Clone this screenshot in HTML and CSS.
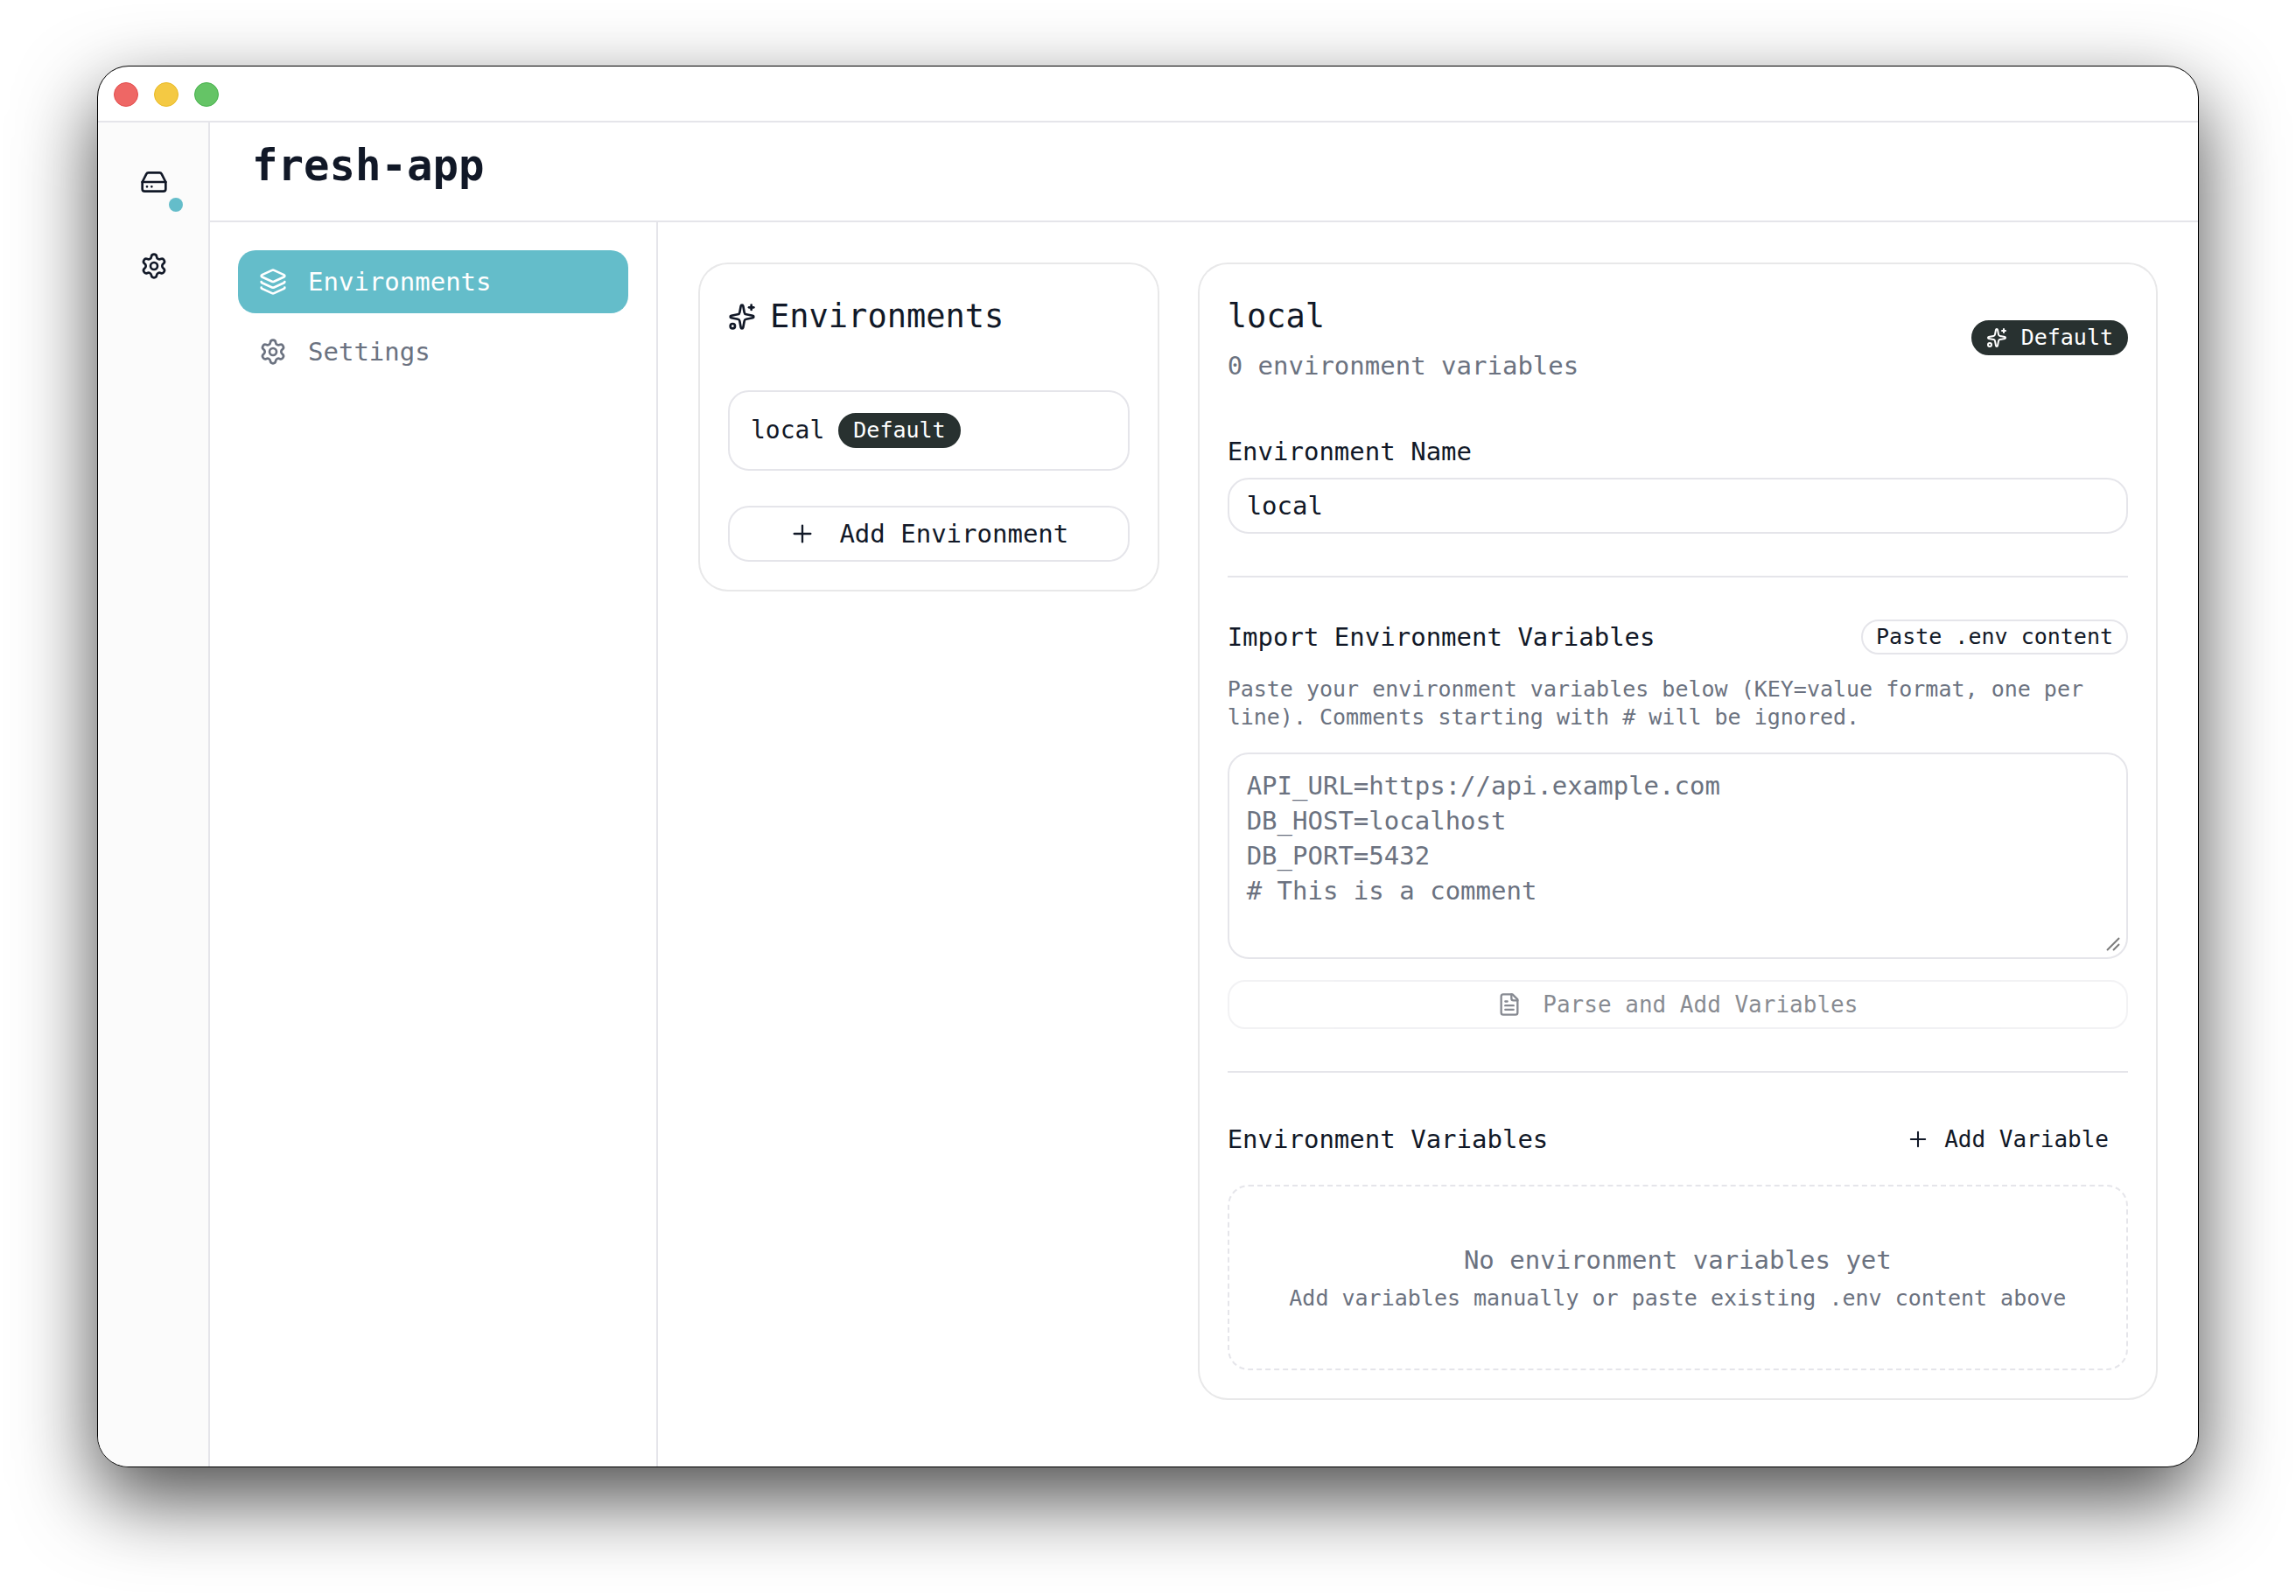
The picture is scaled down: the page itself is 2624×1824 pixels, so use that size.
FILE: index.html
```html
<!DOCTYPE html>
<html lang="en">
<head>
<meta charset="utf-8">
<meta name="viewport" content="width=device-width, initial-scale=1">
<title>fresh-app</title>
<link rel="stylesheet" href="styles.css">
</head>
<body>
<svg class="sprite" aria-hidden="true">
  <symbol id="drive" viewBox="0 0 24 24"><path d="M22 12H2"/><path d="M5.45 5.11 2 12v6a2 2 0 0 0 2 2h16a2 2 0 0 0 2-2v-6l-3.45-6.89A2 2 0 0 0 16.76 4H7.24a2 2 0 0 0-1.79 1.11z"/><path d="M6 16h.01M10 16h.01"/></symbol>
  <symbol id="gear" viewBox="0 0 24 24"><path d="M9.671 4.136a2.34 2.34 0 0 1 4.659 0 2.34 2.34 0 0 0 3.319 1.915 2.34 2.34 0 0 1 2.33 4.033 2.34 2.34 0 0 0 0 3.831 2.34 2.34 0 0 1-2.33 4.033 2.34 2.34 0 0 0-3.319 1.915 2.34 2.34 0 0 1-4.659 0 2.34 2.34 0 0 0-3.32-1.915 2.34 2.34 0 0 1-2.33-4.033 2.34 2.34 0 0 0 0-3.831A2.34 2.34 0 0 1 6.35 6.051a2.34 2.34 0 0 0 3.319-1.915"/><circle cx="12" cy="12" r="3"/></symbol>
  <symbol id="layers" viewBox="0 0 24 24"><path d="M12.83 2.18a2 2 0 0 0-1.66 0L2.6 6.08a1 1 0 0 0 0 1.83l8.58 3.91a2 2 0 0 0 1.66 0l8.58-3.9a1 1 0 0 0 0-1.83z"/><path d="M2 12a1 1 0 0 0 .58.91l8.6 3.91a2 2 0 0 0 1.65 0l8.58-3.9A1 1 0 0 0 22 12"/><path d="M2 17a1 1 0 0 0 .58.91l8.6 3.91a2 2 0 0 0 1.65 0l8.58-3.9A1 1 0 0 0 22 17"/></symbol>
  <symbol id="sparkles" viewBox="0 0 24 24"><path d="M11.017 2.814a1 1 0 0 1 1.966 0l1.051 5.558a2 2 0 0 0 1.594 1.594l5.558 1.051a1 1 0 0 1 0 1.966l-5.558 1.051a2 2 0 0 0-1.594 1.594l-1.051 5.558a1 1 0 0 1-1.966 0l-1.051-5.558a2 2 0 0 0-1.594-1.594l-5.558-1.051a1 1 0 0 1 0-1.966l5.558-1.051a2 2 0 0 0 1.594-1.594z"/><path d="M20 2v4"/><path d="M22 4h-4"/><circle cx="4" cy="20" r="2"/></symbol>
  <symbol id="plus" viewBox="0 0 24 24"><path d="M5 12h14"/><path d="M12 5v14"/></symbol>
  <symbol id="file" viewBox="0 0 24 24"><path d="M15 2H6a2 2 0 0 0-2 2v16a2 2 0 0 0 2 2h12a2 2 0 0 0 2-2V7Z"/><path d="M14 2v4a2 2 0 0 0 2 2h4"/><path d="M10 9H8"/><path d="M16 13H8"/><path d="M16 17H8"/></symbol>
</svg>

<div class="window">
  <div class="titlebar">
    <button class="light light-close" aria-label="Close"></button>
    <button class="light light-minimize" aria-label="Minimize"></button>
    <button class="light light-zoom" aria-label="Zoom"></button>
  </div>

  <div class="shell">
    <nav class="rail" aria-label="Main">
      <button class="rail-button" aria-label="Projects"><svg class="icon"><use href="#drive"/></svg><span class="rail-dot"></span></button>
      <button class="rail-button" aria-label="Preferences"><svg class="icon"><use href="#gear"/></svg></button>
    </nav>

    <div class="project">
      <header class="project-header">
        <h1 class="project-name">fresh-app</h1>
      </header>

      <div class="project-body">
        <nav class="side-nav" aria-label="Project">
          <a class="side-link side-link-active" href="#environments"><svg class="icon"><use href="#layers"/></svg>Environments</a>
          <a class="side-link" href="#settings"><svg class="icon"><use href="#gear"/></svg>Settings</a>
        </nav>

        <main class="content">
          <section class="card list-card">
            <h2 class="card-title"><svg class="icon"><use href="#sparkles"/></svg>Environments</h2>
            <button class="environment">local<span class="badge">Default</span></button>
            <button class="button"><svg class="icon icon-thin"><use href="#plus"/></svg>Add Environment</button>
          </section>

          <section class="card detail-card">
            <header class="detail-header">
              <div class="detail-heading">
                <h2 class="card-title">local</h2>
                <p class="muted">0 environment variables</p>
              </div>
              <span class="badge"><svg class="icon icon-small"><use href="#sparkles"/></svg>Default</span>
            </header>

            <div class="field">
              <label class="label" for="environment-name">Environment Name</label>
              <input class="input" id="environment-name" type="text" value="local">
            </div>

            <hr class="separator">

            <div class="group">
              <div class="group-header">
                <label class="group-title" for="env-content">Import Environment Variables</label>
                <button class="badge badge-outline">Paste .env content</button>
              </div>
              <p class="muted small">Paste your environment variables below (KEY=value format, one per line). Comments starting with # will be ignored.</p>
              <div class="textarea-wrap">
                <textarea class="textarea" id="env-content" placeholder="API_URL=https://api.example.com&#10;DB_HOST=localhost&#10;DB_PORT=5432&#10;# This is a comment"></textarea>
                <svg class="grip" viewBox="0 0 16 16" aria-hidden="true"><path d="M1 15 15 1M8 15l7-7"/></svg>
              </div>
              <button class="button button-small" disabled><svg class="icon icon-medium"><use href="#file"/></svg>Parse and Add Variables</button>
            </div>

            <hr class="separator">

            <div class="group">
              <div class="group-header">
                <h3 class="group-title">Environment Variables</h3>
                <button class="button button-small button-ghost"><svg class="icon icon-medium icon-thin"><use href="#plus"/></svg>Add Variable</button>
              </div>
              <div class="empty">
                <p class="muted">No environment variables yet</p>
                <p class="muted small">Add variables manually or paste existing .env content above</p>
              </div>
            </div>
          </section>
        </main>
      </div>
    </div>
  </div>
</div>
</body>
</html>
```
FILE: styles.css
```css
:root {
  --ink: #111827;
  --muted: #6b7280;
  --line: #e5e5ea;
  --accent: #64bdca;
  --dark: #283130;
}

* {
  box-sizing: border-box;
}

body {
  display: flex;
  min-height: 100vh;
  margin: 0;
  padding: 75px 111px 147px;
  background: #fff;
  color: var(--ink);
  font-family: "DejaVu Sans Mono", "Liberation Mono", monospace;
  font-size: 29px;
  line-height: 40px;
}

h1, h2, h3, p {
  margin: 0;
  font-weight: 400;
}

button, input, textarea {
  margin: 0;
  color: inherit;
  font: inherit;
}

button {
  padding: 0;
  border: 0;
  background: none;
}

.sprite {
  position: absolute;
  width: 0;
  height: 0;
}

.icon {
  flex: none;
  width: 32px;
  height: 32px;
  fill: none;
  stroke: currentColor;
  stroke-width: 2;
  stroke-linecap: round;
  stroke-linejoin: round;
}

.icon-medium {
  width: 28px;
  height: 28px;
}

.icon-small {
  width: 24px;
  height: 24px;
}

.icon-thin {
  stroke-width: 1.75;
}

/* Window frame */
.window {
  display: flex;
  flex: 1;
  flex-direction: column;
  min-width: 0;
  overflow: hidden;
  border: 1px solid #000;
  border-radius: 36px;
  background: #fff;
  box-shadow: 0 36px 90px rgba(0, 0, 0, 0.7);
}

.titlebar {
  display: flex;
  align-items: center;
  gap: 18px;
  height: 64px;
  padding: 2px 18px 0;
  border-bottom: 2px solid var(--line);
}

.light {
  width: 28px;
  height: 28px;
  border: 1px solid;
  border-radius: 50%;
}

.light-close {
  border-color: #e24b4b;
  background: #ee6765;
}

.light-minimize {
  border-color: #e8b923;
  background: #f4c943;
}

.light-zoom {
  border-color: #45b04a;
  background: #65c466;
}

.shell {
  display: flex;
  flex: 1;
}

.rail {
  display: flex;
  flex: none;
  flex-direction: column;
  align-items: center;
  gap: 16px;
  width: 128px;
  padding: 28px 0 28px 2px;
  border-right: 2px solid var(--line);
  background: #fbfbfb;
}

.rail-button {
  position: relative;
  display: flex;
  align-items: center;
  justify-content: center;
  width: 80px;
  height: 80px;
}

.rail-dot {
  position: absolute;
  right: 7px;
  bottom: 6px;
  width: 16px;
  height: 16px;
  border-radius: 50%;
  background: var(--accent);
}

.project {
  display: flex;
  flex: 1;
  flex-direction: column;
  min-width: 0;
}

.project-header {
  padding: 22px 48px 34px;
  border-bottom: 2px solid var(--line);
}

.project-name {
  font-size: 49px;
  font-weight: 700;
  line-height: 56px;
}

.project-body {
  display: flex;
  flex: 1;
}

.side-nav {
  display: flex;
  flex: none;
  flex-direction: column;
  gap: 8px;
  width: 512px;
  padding: 32px;
  border-right: 2px solid var(--line);
}

.side-link {
  display: flex;
  align-items: center;
  gap: 24px;
  height: 72px;
  padding: 0 24px;
  border-radius: 20px;
  color: var(--muted);
  text-decoration: none;
}

.side-link-active {
  background: var(--accent);
  color: #fff;
}

/* Cards */
.content {
  display: grid;
  flex: 1;
  grid-template-columns: repeat(3, minmax(0, 1fr));
  gap: 48px;
  align-items: start;
  padding: 48px;
}

.card {
  display: flex;
  flex-direction: column;
  padding: 32px;
  border-radius: 32px;
  background: #fff;
  box-shadow: 0 0 0 2px #e8e8e9;
}

.list-card {
  gap: 40px;
}

.detail-card {
  grid-column: span 2;
  gap: 48px;
}

.card-title {
  display: flex;
  align-items: center;
  gap: 16px;
  font-size: 37px;
  line-height: 56px;
}

.list-card .card-title {
  margin-bottom: 16px;
}

.environment {
  display: flex;
  align-items: center;
  gap: 16px;
  height: 92px;
  padding: 0 24px;
  border: 2px solid var(--line);
  border-radius: 24px;
  font-size: 28px;
}

.badge {
  display: inline-flex;
  align-items: center;
  gap: 16px;
  height: 40px;
  padding: 0 15px;
  border: 2px solid var(--dark);
  border-radius: 20px;
  background: var(--dark);
  color: #fff;
  font-size: 25px;
  line-height: 32px;
}

.badge-outline {
  border-color: var(--line);
  background: none;
  color: var(--ink);
}

.button {
  display: flex;
  align-items: center;
  justify-content: center;
  gap: 26px;
  height: 64px;
  border: 2px solid var(--line);
  border-radius: 24px;
}

.button-small {
  gap: 24px;
  height: 56px;
  border-radius: 20px;
  font-size: 26px;
}

.button-ghost {
  gap: 16px;
  padding: 0 20px;
  border-color: transparent;
}

.button:disabled {
  opacity: 0.5;
}

.detail-header,
.group-header {
  display: flex;
  align-items: center;
  justify-content: space-between;
}

.detail-header {
  margin-bottom: 16px;
}

.detail-heading {
  display: flex;
  flex-direction: column;
  gap: 8px;
}

.group-title {
  font-size: 29px;
}

.muted {
  color: var(--muted);
}

.small {
  font-size: 25px;
  line-height: 32px;
}

.field {
  display: flex;
  flex-direction: column;
  gap: 16px;
}

.label {
  line-height: 28px;
}

.input {
  width: 100%;
  height: 64px;
  padding: 0 20px;
  border: 2px solid var(--line);
  border-radius: 24px;
  background: none;
}

.separator {
  width: 100%;
  height: 2px;
  margin: 0;
  border: 0;
  background: var(--line);
}

.group {
  display: flex;
  flex-direction: column;
  gap: 24px;
}

.textarea-wrap {
  position: relative;
  display: flex;
}

.textarea {
  flex: 1;
  min-height: 236px;
  padding: 16px 20px;
  border: 2px solid var(--line);
  border-radius: 24px;
  background: none;
  resize: none;
}

.textarea::placeholder {
  color: var(--muted);
  opacity: 1;
}

.grip {
  position: absolute;
  right: 9px;
  bottom: 9px;
  width: 16px;
  height: 16px;
  fill: none;
  stroke: #7c7c7c;
  stroke-width: 2;
}

.empty {
  display: flex;
  flex-direction: column;
  gap: 8px;
  padding: 64px 32px;
  border: 2px dashed var(--line);
  border-radius: 24px;
  text-align: center;
}
```
